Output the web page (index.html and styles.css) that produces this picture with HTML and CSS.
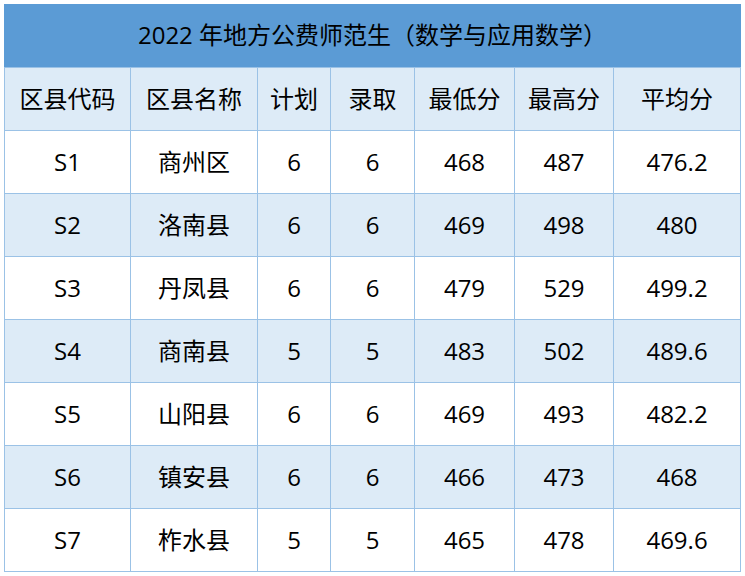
FILE: index.html
```html
<!DOCTYPE html>
<html lang="zh">
<head>
<meta charset="utf-8">
<link rel="stylesheet" href="styles.css">
</head>
<body>
<table class="grid">
  <colgroup>
    <col class="c1"><col class="c2"><col class="c3"><col class="c4"><col class="c5"><col class="c6"><col class="c7">
  </colgroup>
  <tr class="title"><td colspan="7">2022 年地方公费师范生（数学与应用数学）</td></tr>
  <tr class="head"><td>区县代码</td><td>区县名称</td><td>计划</td><td>录取</td><td>最低分</td><td>最高分</td><td>平均分</td></tr>
  <tr><td>S1</td><td>商州区</td><td>6</td><td>6</td><td>468</td><td>487</td><td>476.2</td></tr>
  <tr class="alt"><td>S2</td><td>洛南县</td><td>6</td><td>6</td><td>469</td><td>498</td><td>480</td></tr>
  <tr><td>S3</td><td>丹凤县</td><td>6</td><td>6</td><td>479</td><td>529</td><td>499.2</td></tr>
  <tr class="alt"><td>S4</td><td>商南县</td><td>5</td><td>5</td><td>483</td><td>502</td><td>489.6</td></tr>
  <tr><td>S5</td><td>山阳县</td><td>6</td><td>6</td><td>469</td><td>493</td><td>482.2</td></tr>
  <tr class="alt"><td>S6</td><td>镇安县</td><td>6</td><td>6</td><td>466</td><td>473</td><td>468</td></tr>
  <tr><td>S7</td><td>柞水县</td><td>5</td><td>5</td><td>465</td><td>478</td><td>469.6</td></tr>
</table>
</body>
</html>
```

FILE: styles.css
```css
html, body {
  margin: 0;
  padding: 0;
  background: #ffffff;
}
body {
  padding: 4px;
  font-family: "Open Sans", "Noto Sans CJK SC", sans-serif;
  color: #000;
}
.grid {
  border-collapse: collapse;
  table-layout: fixed;
  width: 736px;
}
.c1 { width: 126px; }
.c2 { width: 127px; }
.c3 { width: 73px; }
.c4 { width: 84px; }
.c5 { width: 100px; }
.c6 { width: 99px; }
.c7 { width: 127px; }
.grid td {
  border: 1px solid #9bc2e6;
  height: 62px;
  padding: 0;
  text-align: center;
  vertical-align: middle;
  font-size: 24px;
  line-height: 1;
  white-space: nowrap;
}
.grid .title td {
  background: #5b9bd5;
  border-color: #5b9bd5;
  border-bottom-color: #9bc2e6;
  font-size: 24px;
  height: 60px;
  padding-bottom: 2px;
}
.grid .head td,
.grid .alt td {
  background: #ddebf7;
}
```
